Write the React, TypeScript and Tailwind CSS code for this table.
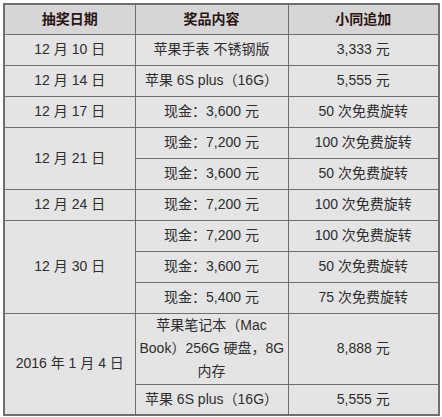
const cell = "border border-[#6f6f6f] text-center align-middle px-1 whitespace-nowrap";

type Row = { date?: string; dateSpan?: number; prize: React.ReactNode; extra: string };

const rows: Row[] = [
  { date: "12 月 10 日", prize: "苹果手表 不锈钢版", extra: "3,333 元" },
  { date: "12 月 14 日", prize: "苹果 6S plus（16G）", extra: "5,555 元" },
  { date: "12 月 17 日", prize: "现金：3,600 元", extra: "50 次免费旋转" },
  { date: "12 月 21 日", dateSpan: 2, prize: "现金：7,200 元", extra: "100 次免费旋转" },
  { prize: "现金：3,600 元", extra: "50 次免费旋转" },
  { date: "12 月 24 日", prize: "现金：7,200 元", extra: "100 次免费旋转" },
  { date: "12 月 30 日", dateSpan: 3, prize: "现金：7,200 元", extra: "100 次免费旋转" },
  { prize: "现金：3,600 元", extra: "50 次免费旋转" },
  { prize: "现金：5,400 元", extra: "75 次免费旋转" },
  {
    date: "2016 年 1 月 4 日",
    dateSpan: 2,
    prize: (
      <>
        苹果笔记本（Mac
        <br />
        Book）256G 硬盘，8G
        <br />
        内存
      </>
    ),
    extra: "8,888 元",
  },
  { prize: "苹果 6S plus（16G）", extra: "5,555 元" },
];

export default function App() {
  return (
    <div className="bg-white w-[442px] h-[417px] pt-[3px] pl-[3px]">
      <table
        className="border-collapse border-2 border-[#6f6f6f] bg-[#e4e4e4] text-[14px] text-[#2e2e2e] w-[437px] table-fixed"
        style={{ fontFamily: '"Liberation Sans", "Noto Sans CJK SC", sans-serif' }}
      >
        <colgroup>
          <col className="w-[131px]" />
          <col className="w-[153px]" />
          <col />
        </colgroup>
        <thead>
          <tr className="h-[30px] bg-[#d6d6d6] text-[#2a1414] font-bold">
            <th className={cell}>抽奖日期</th>
            <th className={cell}>奖品内容</th>
            <th className={cell}>小同追加</th>
          </tr>
        </thead>
        <tbody>
          {rows.map((r, i) => (
            <tr key={i} className={typeof r.prize === "string" ? "h-[31px]" : "h-[71px]"}>
              {r.date && (
                <td className={cell} rowSpan={r.dateSpan ?? 1}>
                  {r.date}
                </td>
              )}
              <td className={`${cell} leading-[23px] px-0`}>{r.prize}</td>
              <td className={cell}>{r.extra}</td>
            </tr>
          ))}
        </tbody>
      </table>
    </div>
  );
}
